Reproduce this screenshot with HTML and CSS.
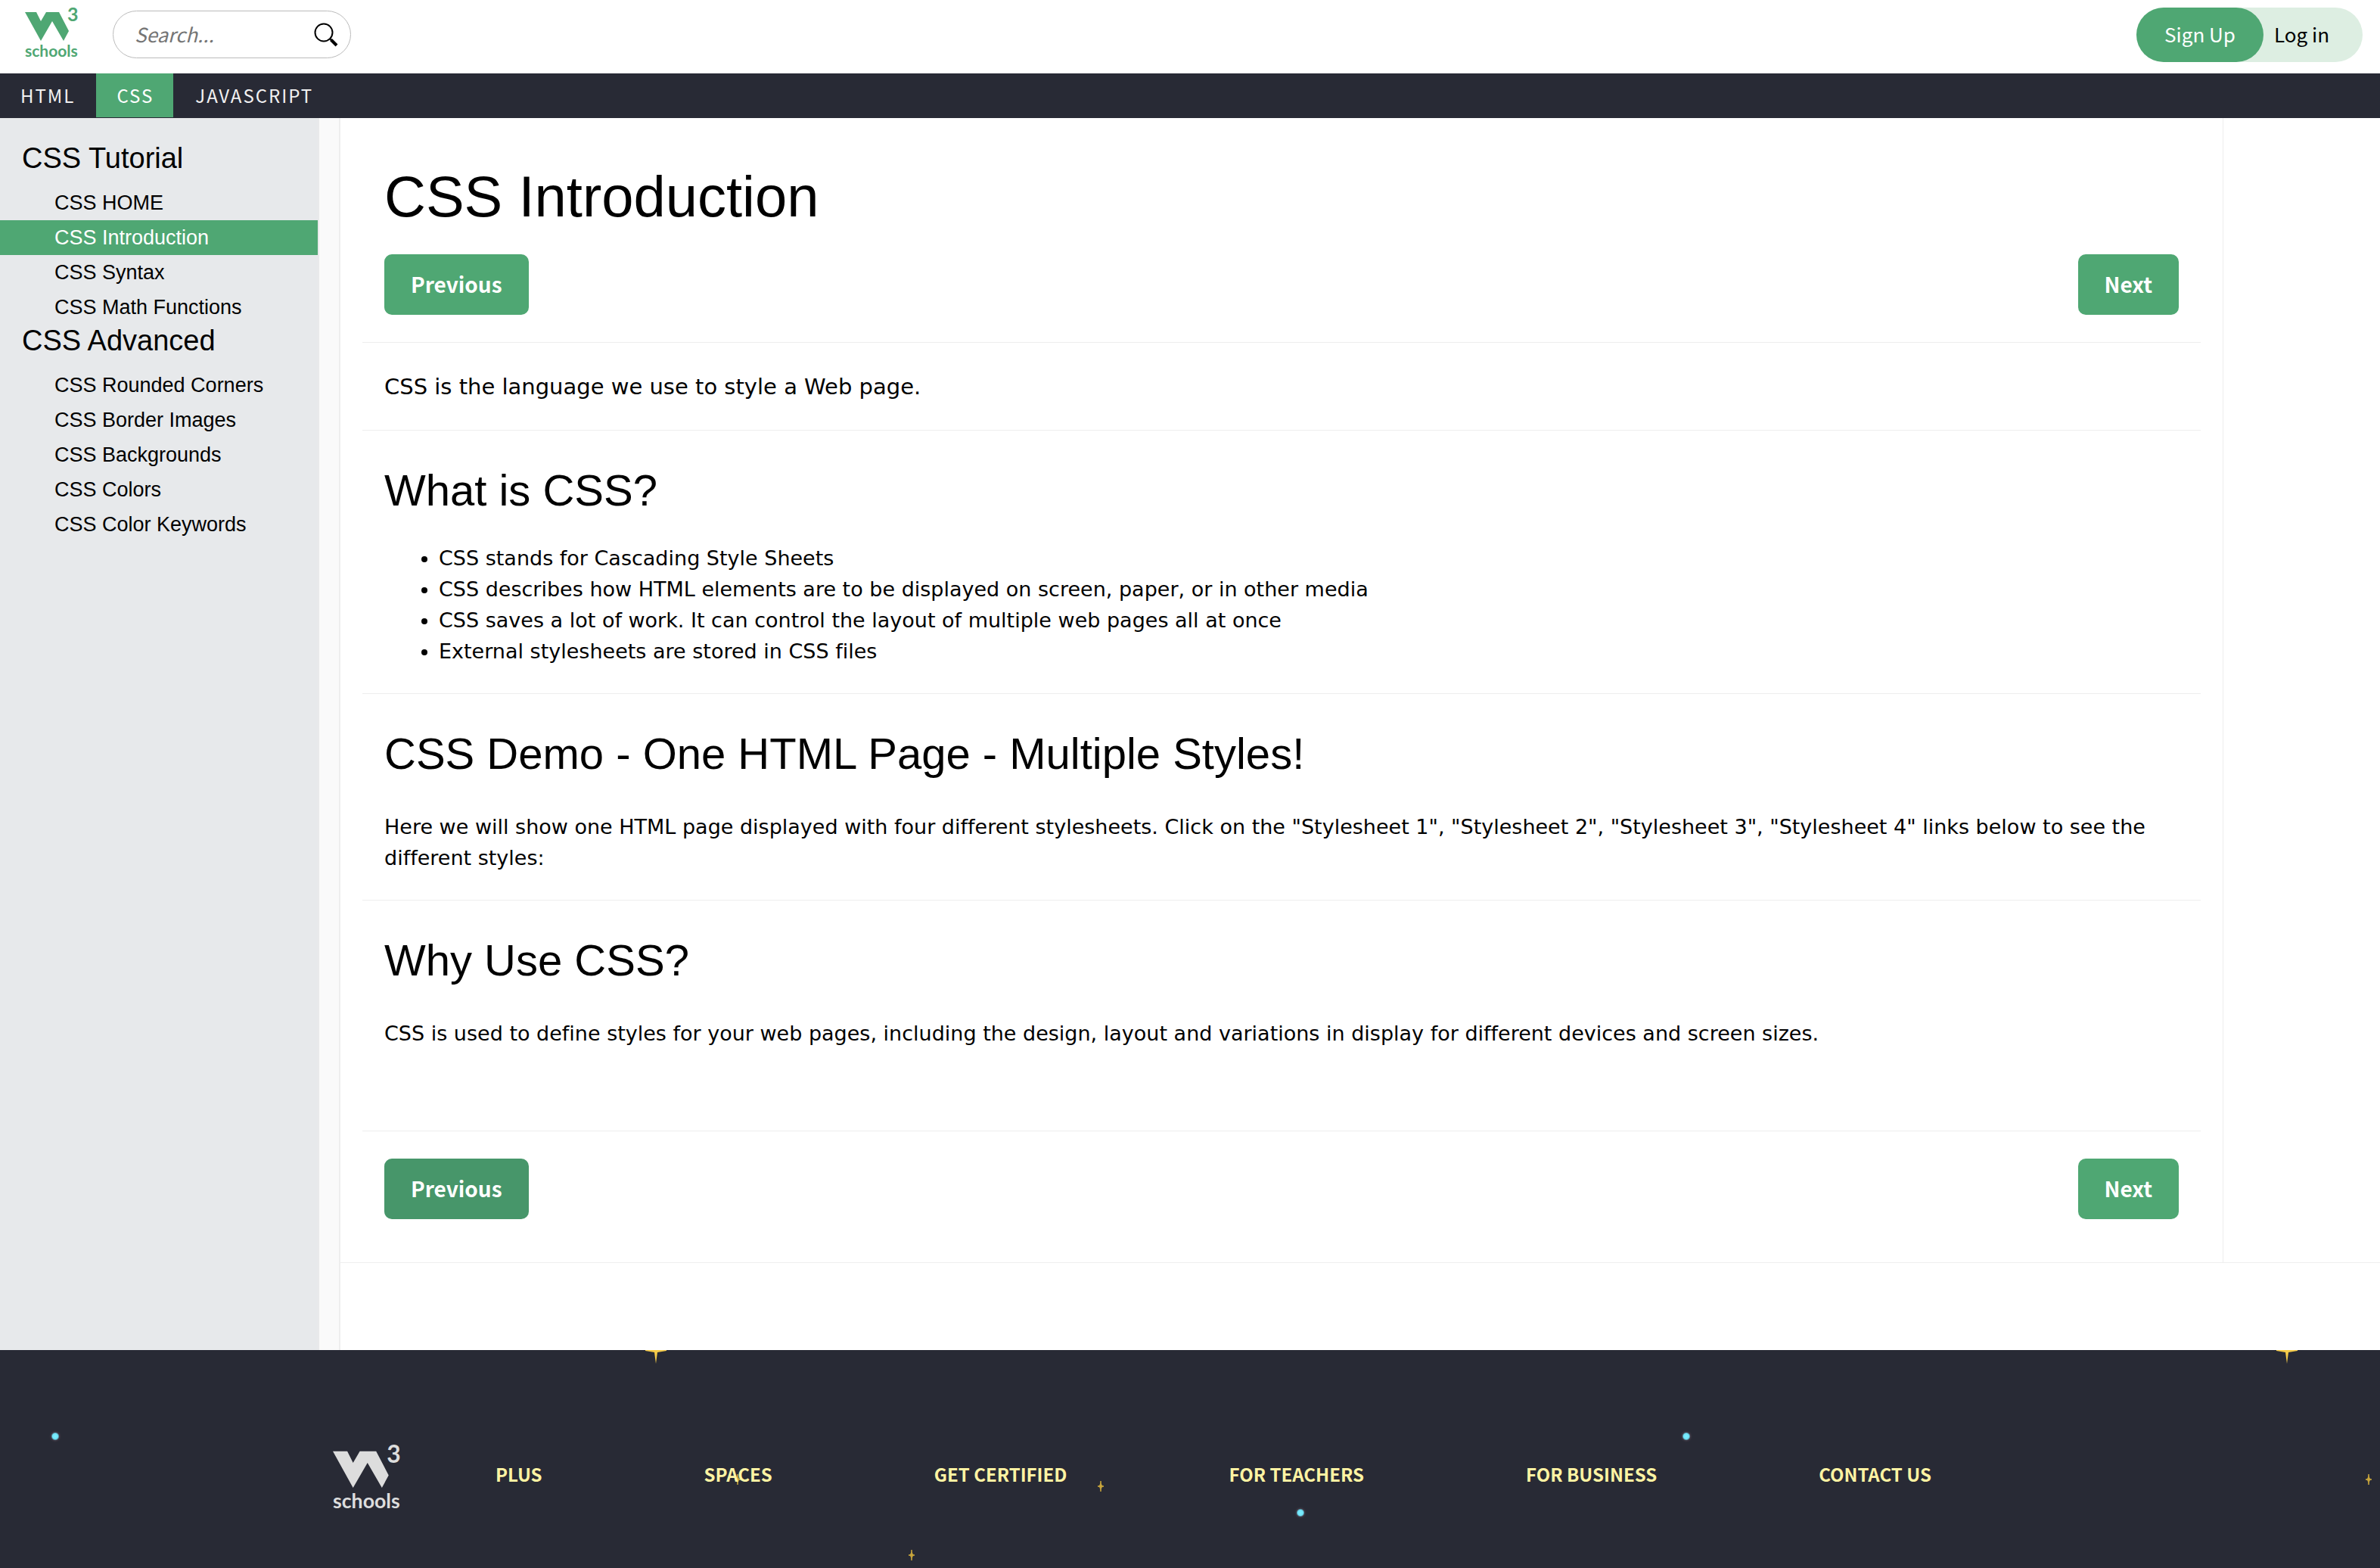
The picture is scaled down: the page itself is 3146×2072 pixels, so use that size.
FILE: index.html
```html
<!DOCTYPE html>
<html lang="en">
<head>
<meta charset="utf-8">
<title>CSS Introduction</title>
<link rel="stylesheet" href="styles.css">
</head>
<body>
<svg class="defs" aria-hidden="true">
  <symbol id="logo" viewBox="0 0 70 66">
    <path d="M0 6H15L21 18L28 6H45L58 31L51 44L36 18L21 44Z"/>
    <text class="logo-three" x="56" y="18">3</text>
    <text class="logo-name" x="0" y="65">schools</text>
  </symbol>
</svg>

<header class="top">
  <a class="logo" href="#" aria-label="W3Schools home"><svg width="70" height="66"><use href="#logo"/></svg></a>
  <form class="search">
    <input type="search" aria-label="Search" placeholder="Search...">
    <button type="button" aria-label="Search">
      <svg width="32" height="32" viewBox="0 0 32 32" fill="none" stroke="#000"><circle cx="13" cy="13" r="11.5" stroke-width="2"/><path d="M21 21L23 23" stroke-width="2"/><path d="M22.500 22.500L30 30" stroke-width="4"/></svg>
    </button>
  </form>
  <div class="account">
    <a class="signup" href="#">Sign Up</a>
    <a class="login" href="#">Log in</a>
  </div>
</header>

<nav class="topics">
  <a href="#">HTML</a>
  <a class="active" href="#">CSS</a>
  <a href="#">JAVASCRIPT</a>
</nav>

<div class="layout">
  <aside class="sidebar">
    <h2>CSS Tutorial</h2>
    <ul>
      <li><a href="#">CSS HOME</a></li>
      <li><a class="active" href="#">CSS Introduction</a></li>
      <li><a href="#">CSS Syntax</a></li>
      <li><a href="#">CSS Math Functions</a></li>
    </ul>
    <h2>CSS Advanced</h2>
    <ul>
      <li><a href="#">CSS Rounded Corners</a></li>
      <li><a href="#">CSS Border Images</a></li>
      <li><a href="#">CSS Backgrounds</a></li>
      <li><a href="#">CSS Colors</a></li>
      <li><a href="#">CSS Color Keywords</a></li>
    </ul>
  </aside>
  <div class="gutter"></div>
  <div class="content">
    <div class="columns">
      <main>
        <h1>CSS Introduction</h1>
        <div class="pager"><a href="#">Previous</a><a href="#">Next</a></div>
        <hr>
        <p class="intro">CSS is the language we use to style a Web page.</p>
        <hr>
        <h2>What is CSS?</h2>
        <ul>
          <li>CSS stands for Cascading Style Sheets</li>
          <li>CSS describes how HTML elements are to be displayed on screen, paper, or in other media</li>
          <li>CSS saves a lot of work. It can control the layout of multiple web pages all at once</li>
          <li>External stylesheets are stored in CSS files</li>
        </ul>
        <hr>
        <h2>CSS Demo - One HTML Page - Multiple Styles!</h2>
        <p>Here we will show one HTML page displayed with four different stylesheets. Click on the "Stylesheet 1", "Stylesheet 2", "Stylesheet 3", "Stylesheet 4" links below to see the different styles:</p>
        <hr>
        <h2>Why Use CSS?</h2>
        <p class="last">CSS is used to define styles for your web pages, including the design, layout and variations in display for different devices and screen sizes.</p>
        <hr>
        <div class="pager"><a class="pressed" href="#">Previous</a><a href="#">Next</a></div>
      </main>
    </div>
  </div>
</div>

<footer class="footer">
  <svg class="stars" aria-hidden="true">
    <defs>
      <radialGradient id="glow"><stop offset="0" stop-color="#7ff0ff"/><stop offset="0.45" stop-color="#6fe3f8"/><stop offset="0.7" stop-color="#3a3440"/><stop offset="1" stop-color="#282a35"/></radialGradient>
      <path id="spark" d="M0 -7Q0 0 4 0Q0 0 0 7Q0 0 -4 0Q0 0 0 -7Z" fill="#c9a63c" stroke="#c9a63c"/>
      <g id="sky">
        <path d="M853 0H881V1L869 3L867 18L865 3L853 1Z" fill="#f5cb48"/>
        <circle cx="73" cy="114" r="8" fill="url(#glow)"/>
        <circle cx="1719" cy="215" r="8" fill="url(#glow)"/>
        <use href="#spark" x="975" y="171"/>
        <use href="#spark" x="1455" y="180"/>
        <use href="#spark" x="1205" y="271"/>
      </g>
    </defs>
    <use href="#sky"/>
    <use href="#sky" x="2156"/>
  </svg>
  <a class="footer-logo" href="#" aria-label="W3Schools home"><svg width="89" height="84"><use href="#logo"/></svg></a>
  <nav class="footer-links">
    <a href="#">PLUS</a>
    <a href="#">SPACES</a>
    <a href="#">GET CERTIFIED</a>
    <a href="#">FOR TEACHERS</a>
    <a href="#">FOR BUSINESS</a>
    <a href="#">CONTACT US</a>
  </nav>
</footer>
</body>
</html>
```

FILE: styles.css
```css
* { box-sizing: border-box; }

body {
  margin: 0;
  min-height: 100vh;
  display: flex;
  flex-direction: column;
  background: #fff;
  color: #000;
  font-family: "DejaVu Sans", sans-serif;
  font-size: 27px;
  font-variant-ligatures: none;
  line-height: 41px;
}

a { color: inherit; text-decoration: none; }
svg { display: block; }
svg, symbol { overflow: visible; }
.defs { position: absolute; width: 0; height: 0; }

/* header */
.top {
  display: flex;
  align-items: flex-start;
  height: 97px;
  padding: 10px 23px 0 33px;
  font-family: "Noto Sans CJK SC", sans-serif;
}
.logo { margin-right: 46px; fill: #4fa773; }
.logo-three { font: 700 25px Lato, sans-serif; }
.logo-name { font: 700 21px Lato, sans-serif; }
.search {
  display: flex;
  align-items: center;
  width: 315px;
  height: 63px;
  margin-top: 4px;
  padding: 0 16px 0 28px;
  border: 1px solid #bbb;
  border-radius: 32px;
}
.search input {
  flex: 1;
  min-width: 0;
  padding: 0 0 3px;
  border: 0;
  outline: 0;
  background: none;
  font: italic 26px "Noto Sans CJK SC", sans-serif;
}
.search input::placeholder { color: #757575; opacity: 1; }
.search button { padding: 0; border: 0; background: none; }
.account {
  display: flex;
  height: 72px;
  margin-left: auto;
  border-radius: 36px;
  background: #ddeee2;
  font-size: 26px;
  line-height: 70px;
}
.signup { padding: 0 37px; border-radius: 36px; background: #4fa773; color: #fff; }
.login { padding: 0 44px 0 14px; }

/* topic bar */
.topics {
  display: flex;
  gap: 2px;
  height: 59px;
  background: #282a35;
  color: #f1f1f1;
  font-family: "Noto Sans CJK SC", sans-serif;
  font-size: 24px;
  line-height: 57px;
  letter-spacing: 2px;
}
.topics a { height: 58px; padding: 0 26px 0 27px; }
.topics .active { background: #4fa773; color: #fff; }

/* page body */
.layout { display: flex; }
.sidebar {
  width: 422px;
  padding-top: 32px;
  border-right: 2px solid #e9eaeb;
  background: #e7e9eb;
  font-family: "Liberation Sans", sans-serif;
}
.sidebar h2 {
  margin: 0;
  padding: 0 29px 15px;
  font-size: 38px;
  font-weight: 400;
  line-height: 42px;
}
.sidebar ul { margin: 0; padding: 0; list-style: none; }
.sidebar li a { display: block; padding-left: 72px; line-height: 46px; }
.sidebar .active { background: #4fa773; color: #fff; }
.gutter { width: 28px; border-right: 2px solid #eee; background: #fafafa; }
.content { flex: 1; min-width: 0; padding-bottom: 115px; }
.columns { padding-right: 207px; border-bottom: 1px solid #eee; }

main { padding: 64px 29px 57px; border-right: 1px solid #eee; }
main > * { margin: 0; padding: 0 29px; }
main h1, main h2 { font-family: "Liberation Sans", sans-serif; font-weight: 400; }
main h1 { font-size: 76px; line-height: 80px; }
main h2 { padding-top: 40px; font-size: 58px; line-height: 78px; }
main hr { border: 0; border-top: 1px solid #eee; }
main > p { padding-bottom: 35px; }
main > h2 + p { padding-top: 37px; }
main > .intro { padding-top: 38px; padding-bottom: 36px; font-size: 29px; }
main > ul { padding: 30px 29px 35px 101px; }
main > .last { padding-bottom: 108px; }
.pager {
  display: flex;
  justify-content: space-between;
  font-family: "Noto Sans CJK SC", sans-serif;
  font-size: 28px;
  font-weight: 700;
  line-height: 78px;
}
main .pager { padding-top: 36px; }
h1 + .pager { padding-bottom: 36px; }
.pager a { height: 80px; padding: 0 35px; border-radius: 10px; background: #4fa773; color: #fff; }
.pager .pressed { background: #47966a; }

/* footer */
.footer {
  position: relative;
  flex: 1;
  display: flex;
  align-items: flex-start;
  padding: 126px 440px 77px;
  background: #282a35;
  font-family: "Noto Sans CJK SC", sans-serif;
  overflow: hidden;
}
.stars { position: absolute; top: 0; left: 0; width: 100%; height: 100%; }
.footer-logo { position: relative; fill: #ddd; }
.footer-links {
  position: relative;
  display: flex;
  gap: 214px;
  padding: 17px 0 0 126px;
  color: #fff4a3;
  font-size: 24px;
  font-weight: 700;
  white-space: nowrap;
}
```
